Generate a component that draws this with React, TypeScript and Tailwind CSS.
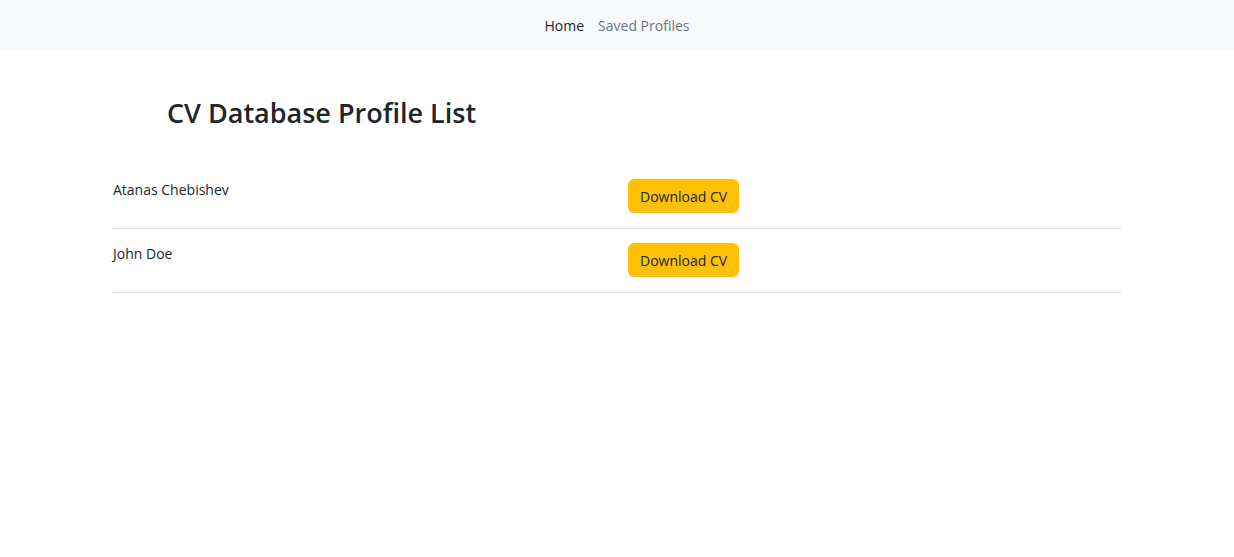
const PROFILES = ["Atanas Chebishev", "John Doe"];

export default function App() {
  return (
    <div className="min-h-[557px] bg-white text-[#212529] font-['Open_Sans',sans-serif]">
      <nav className="h-[50px] bg-[#f8f9fa] flex items-center justify-center gap-[14px] text-[14px]">
        <a className="text-[#212529]">Home</a>
        <a className="text-[#6c757d]">Saved Profiles</a>
      </nav>

      <h2 className="pl-[167px] pt-[44px] text-[27px] font-semibold leading-[38px] text-[#212529]">
        CV Database Profile List
      </h2>

      <div className="mx-[113px] mt-[33px]">
        {PROFILES.map((name) => (
          <div
            key={name}
            className="grid grid-cols-[515px_1fr] h-[64px] border-b border-[#dee2e6] pt-[14px]"
          >
            <div className="text-[14px] leading-[22px]">{name}</div>
            <div>
              <button className="h-[34px] px-[12px] rounded-[6px] bg-[#ffc107] text-[14px] text-[#212529]">
                Download CV
              </button>
            </div>
          </div>
        ))}
      </div>
    </div>
  );
}
